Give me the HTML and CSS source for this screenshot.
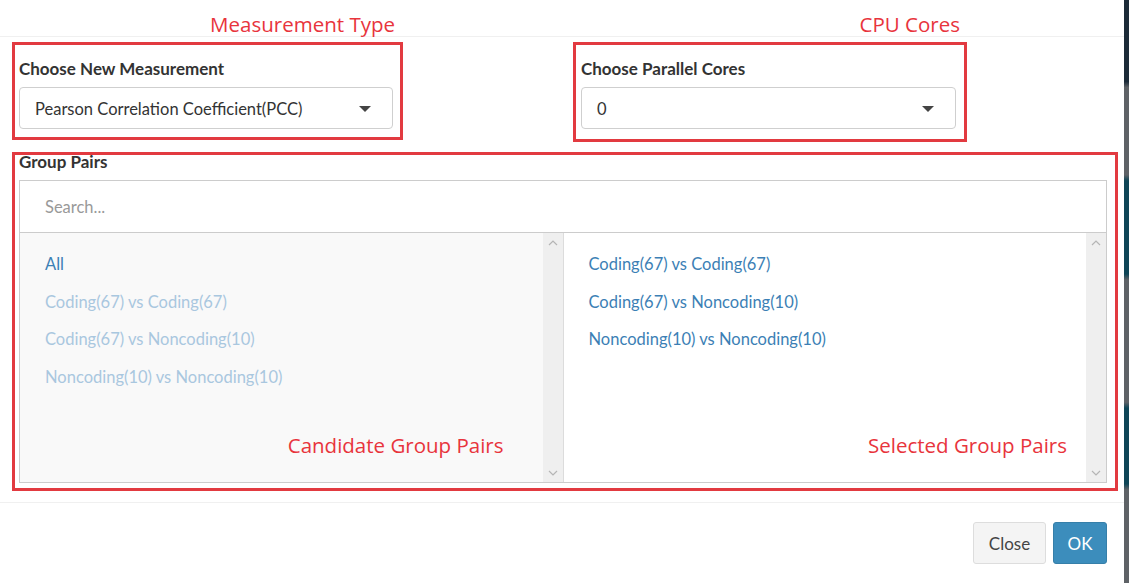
FILE: index.html
```html
<!DOCTYPE html>
<html>
<head>
<meta charset="utf-8">
<link rel="stylesheet" href="styles.css">
</head>
<body>
<div class="screen">
  <div class="modal">
    <div class="modal-header">
      <div class="note-cell note-a"><span class="note">Measurement Type</span></div>
      <div class="note-cell note-b"><span class="note">CPU Cores</span></div>
    </div>
    <div class="modal-body">
      <div class="top-row">
        <div class="mark box-a">
          <div class="label">Choose New Measurement</div>
          <div class="select">
            <span class="select-text">Pearson Correlation Coefficient(PCC)</span>
            <span class="caret"></span>
          </div>
        </div>
        <div class="mark box-b">
          <div class="label">Choose Parallel Cores</div>
          <div class="select">
            <span class="select-text">0</span>
            <span class="caret"></span>
          </div>
        </div>
      </div>
      <div class="mark box-c">
        <div class="label label-gp">Group Pairs</div>
        <div class="dual">
          <div class="search">Search...</div>
          <div class="panes">
            <div class="pane pane-left">
              <ul class="items">
                <li class="item active">All</li>
                <li class="item faded">Coding(67) vs Coding(67)</li>
                <li class="item faded">Coding(67) vs Noncoding(10)</li>
                <li class="item faded">Noncoding(10) vs Noncoding(10)</li>
              </ul>
              <span class="note pane-note note-left">Candidate Group Pairs</span>
              <div class="scrollbar">
                <svg class="arrow" width="10" height="6" viewBox="0 0 10 6"><path d="M1 5 L5 1 L9 5" fill="none" stroke="#b5b5b5" stroke-width="1.2"/></svg>
                <svg class="arrow" width="10" height="6" viewBox="0 0 10 6"><path d="M1 1 L5 5 L9 1" fill="none" stroke="#b5b5b5" stroke-width="1.2"/></svg>
              </div>
            </div>
            <div class="pane pane-right">
              <ul class="items">
                <li class="item">Coding(67) vs Coding(67)</li>
                <li class="item">Coding(67) vs Noncoding(10)</li>
                <li class="item">Noncoding(10) vs Noncoding(10)</li>
              </ul>
              <span class="note pane-note note-right">Selected Group Pairs</span>
              <div class="scrollbar">
                <svg class="arrow" width="10" height="6" viewBox="0 0 10 6"><path d="M1 5 L5 1 L9 5" fill="none" stroke="#b5b5b5" stroke-width="1.2"/></svg>
                <svg class="arrow" width="10" height="6" viewBox="0 0 10 6"><path d="M1 1 L5 5 L9 1" fill="none" stroke="#b5b5b5" stroke-width="1.2"/></svg>
              </div>
            </div>
          </div>
        </div>
      </div>
    </div>
    <div class="modal-footer">
      <button class="btn btn-default">Close</button>
      <button class="btn btn-primary">OK</button>
    </div>
  </div>
  <div class="edge"></div>
</div>
</body>
</html>
```
FILE: styles.css
```css
html, body {
  margin: 0;
  padding: 0;
  background: #fff;
}
body {
  font-family: "Lato", "Open Sans", sans-serif;
  color: #333;
}
.screen {
  display: flex;
  width: 1129px;
  height: 583px;
  overflow: hidden;
}
.modal {
  width: 1124px;
  background: #fff;
  display: flex;
  flex-direction: column;
}
.edge {
  flex: 1;
  background: linear-gradient(to bottom, #1c2b38 0%, #1c2b38 14%, #5e6266 15%, #5e6266 30%, #0e4556 31%, #0e4556 47%, #5e6266 48%, #5e6266 69%, #0e4556 70%, #0e4556 83%, #5e6266 84%, #5e6266 100%);
}
.note {
  font-family: "Open Sans", sans-serif;
  color: #e8343c;
  font-size: 20.5px;
  line-height: 24px;
}
.modal-header {
  height: 36px;
  border-bottom: 1px solid #f0f0f0;
  display: grid;
  grid-template-columns: 391px 393px;
  column-gap: 170px;
  padding-left: 12px;
  box-sizing: content-box;
}
.note-cell {
  text-align: right;
  padding-top: 12px;
}
.note-a { padding-right: 8px; }
.note-b { padding-right: 6px; }

.modal-body {
  padding: 5px 0 0 12px;
}
.top-row {
  display: grid;
  grid-template-columns: 391px 394px;
  column-gap: 170px;
}
.mark {
  border: 3px solid #e23a40;
  box-sizing: border-box;
}
.box-a {
  height: 98px;
  padding: 14px 7px 0 4px;
}
.box-b {
  height: 100px;
  padding: 14px 8px 0 5px;
}
.label {
  font-weight: bold;
  font-size: 17px;
  line-height: 20px;
  color: #333;
}
.select {
  margin-top: 8px;
  height: 42px;
  border: 1px solid #cfcfcf;
  border-radius: 4px;
  box-sizing: border-box;
  display: flex;
  align-items: center;
  justify-content: space-between;
  padding: 2px 21px 0 15px;
}
.select-text {
  font-size: 16.5px;
  color: #333;
}
.caret {
  width: 0;
  height: 0;
  border-left: 6px solid transparent;
  border-right: 6px solid transparent;
  border-top: 6px solid #444;
}
.box-c {
  margin-top: 10px;
  width: 1106px;
  height: 339px;
  padding: 0 8px 5px 4px;
}
.label-gp {
  line-height: 20px;
  margin-top: -3px;
}
.dual {
  margin-top: 8px;
  border: 1px solid #cccccc;
  height: 303px;
  box-sizing: border-box;
  display: flex;
  flex-direction: column;
}
.search {
  height: 51px;
  border-bottom: 1px solid #cccccc;
  padding-left: 25px;
  display: flex;
  align-items: center;
  font-size: 16.5px;
  color: #999;
}
.panes {
  flex: 1;
  display: flex;
}
.pane {
  position: relative;
  flex: 1;
  display: flex;
}
.pane-left {
  background: #f9f9f9;
  border-right: 1px solid #dcdcdc;
}
.pane-right {
  background: #fff;
}
.items {
  list-style: none;
  margin: 0;
  padding: 21px 0 0 25px;
  flex: 1;
}
.item {
  font-size: 16.5px;
  line-height: 20px;
  height: 37.5px;
  color: #3c7fb5;
}
.item.faded {
  color: #a9c7df;
}
.scrollbar {
  width: 20px;
  background: #efefef;
  display: flex;
  flex-direction: column;
  justify-content: space-between;
  align-items: center;
  padding: 7px 0 6px;
  box-sizing: border-box;
}
.arrow { display: block; }
.pane-note {
  position: absolute;
  top: 200px;
}
.note-left { right: 59px; }
.note-right { right: 39px; }

.modal-footer {
  margin-top: 11px;
  border-top: 1px solid #f0f0f0;
  padding: 19px 17px 0 0;
  display: flex;
  justify-content: flex-end;
  gap: 7px;
}
.btn {
  font-family: "Lato", "Open Sans", sans-serif;
  font-size: 17px;
  height: 42px;
  border-radius: 3px;
  box-sizing: border-box;
  cursor: pointer;
}
.btn-default {
  width: 73px;
  background: #f4f4f4;
  border: 1px solid #dddddd;
  color: #444;
}
.btn-primary {
  width: 54px;
  background: #3c8dbc;
  border: 1px solid #367fa9;
  color: #fff;
}
```
